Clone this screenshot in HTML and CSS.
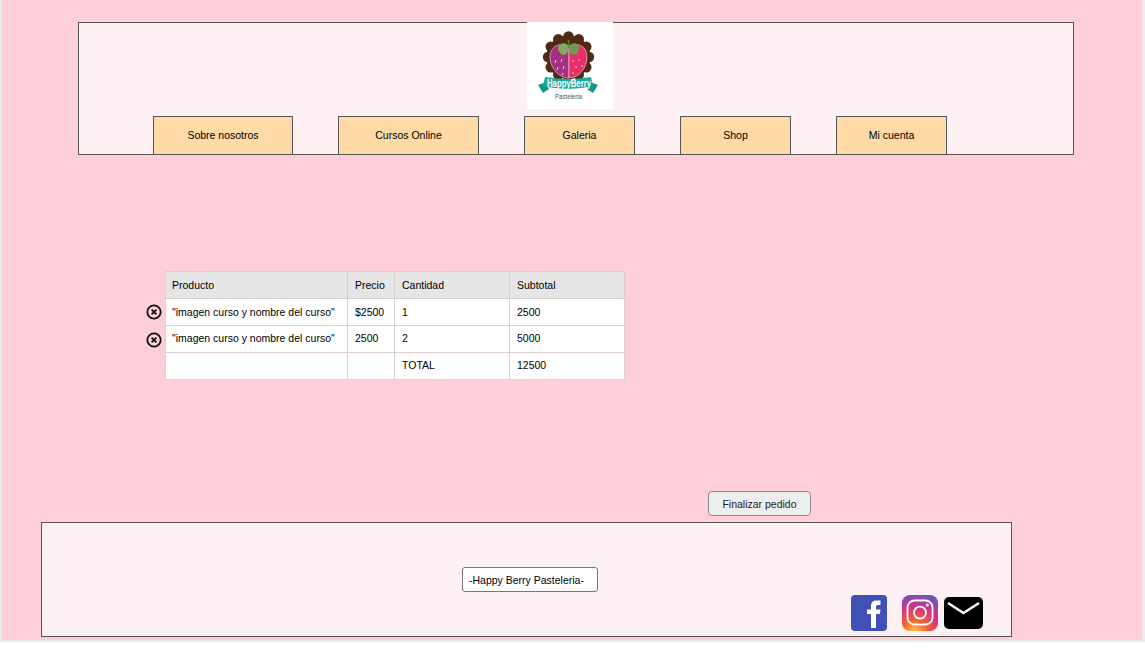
FILE: index.html
```html
<!DOCTYPE html>
<html lang="es">
<head>
  <meta charset="UTF-8" />
  <meta name="viewport" content="width=device-width, initial-scale=1.0"/>
  <title>Happy Berry Pasteleria</title>
  <link rel="stylesheet" href="styles.css">
</head>
<body>
  <div class="page">
    <header class="header">
      <div class="logo">
        <svg width="86" height="87" viewBox="0 0 86 87">
          <rect width="86" height="87" fill="#fff"/>
          <g fill="#4f2a17">
            <circle cx="41.500" cy="35" r="22"/>
            <circle cx="62" cy="35" r="5.200"/>
            <circle cx="59.300" cy="45.300" r="5.200"/>
            <circle cx="51.800" cy="52.800" r="5.200"/>
            <circle cx="41.500" cy="55.500" r="5.200"/>
            <circle cx="31.200" cy="52.800" r="5.200"/>
            <circle cx="23.700" cy="45.300" r="5.200"/>
            <circle cx="21" cy="35" r="5.200"/>
            <circle cx="23.700" cy="24.700" r="5.200"/>
            <circle cx="31.200" cy="17.200" r="5.200"/>
            <circle cx="41.500" cy="14.500" r="5.200"/>
            <circle cx="51.800" cy="17.200" r="5.200"/>
            <circle cx="59.300" cy="24.700" r="5.200"/>
          </g>
          <path d="M42 24 C33 20 23 24 23 35 C23 46 32 56 42 56 Z" fill="#a5307f" stroke="#e9d6e0" stroke-width="0.600"/>
          <path d="M42 24 C51 20 60 24 60 35 C60 46 52 56 42 56 Z" fill="#e82f6c" stroke="#e9d6e0" stroke-width="0.600"/>
          <g fill="none" stroke="#f3d3e4" stroke-width="1">
            <path d="M29 38l-1 3M35 37l-1 3M31 45l-1 3M37 44l-1 3M36 51l-1 2M46 38v2M52 37v2M49 44v2M55 43v2M46 50v2"/>
          </g>
          <path d="M41 23 C37 20 32 21 31 26 C32 33 38 36 41 29 Z" fill="#86a85f"/>
          <path d="M43 23 C47 20 51 21 52 26 C51 33 45 36 43 29 Z" fill="#6f9c4f"/>
          <path d="M41.500 26 L41.500 18" stroke="#4f8a3a" stroke-width="1.500"/>
          <path d="M11 63 L19 60 L22 67 L16 71 Z" fill="#16958a"/>
          <path d="M71 63 L63 60 L60 67 L66 71 Z" fill="#16958a"/>
          <path d="M18 55 Q41 59 64 55 L66 64 Q41 70 16 64 Z" fill="#1aa99b"/>
          <text x="20" y="65" class="logo-name" textLength="44" lengthAdjust="spacingAndGlyphs">HappyBerry</text>
          <text x="28" y="77" class="logo-sub" textLength="27" lengthAdjust="spacingAndGlyphs">Pasteleria</text>
        </svg>
      </div>
      <nav class="nav">
        <a class="nav-btn first">Sobre nosotros</a>
        <a class="nav-btn wide">Cursos Online</a>
        <a class="nav-btn">Galeria</a>
        <a class="nav-btn">Shop</a>
        <a class="nav-btn">Mi cuenta</a>
      </nav>
    </header>

    <section class="cart">
      <div class="remove-col">
        <svg class="remove" width="16" height="16" viewBox="0 0 16 16">
          <circle cx="8" cy="8" r="6.700"/>
          <path d="M5.600 5.600l4.800 4.800M10.400 5.600l-4.800 4.800"/>
        </svg>
        <svg class="remove" width="16" height="16" viewBox="0 0 16 16">
          <circle cx="8" cy="8" r="6.700"/>
          <path d="M5.600 5.600l4.800 4.800M10.400 5.600l-4.800 4.800"/>
        </svg>
      </div>
      <table class="cart-table">
        <thead>
          <tr>
            <th class="c1">Producto</th>
            <th class="c2">Precio</th>
            <th class="c3">Cantidad</th>
            <th class="c4">Subtotal</th>
          </tr>
        </thead>
        <tbody>
          <tr>
            <td>"imagen curso y nombre del curso"</td>
            <td>$2500</td>
            <td>1</td>
            <td>2500</td>
          </tr>
          <tr>
            <td>"imagen curso y nombre del curso"</td>
            <td>2500</td>
            <td>2</td>
            <td>5000</td>
          </tr>
          <tr>
            <td></td>
            <td></td>
            <td>TOTAL</td>
            <td>12500</td>
          </tr>
        </tbody>
      </table>
    </section>

    <div class="actions">
      <button class="finish">Finalizar pedido</button>
    </div>

    <footer class="footer">
      <div class="footer-name">-Happy Berry Pasteleria-</div>
      <div class="social">
        <svg class="fb" width="36" height="36" viewBox="0 0 36 36">
          <rect width="36" height="36" rx="4" fill="#3f51b5"/>
          <path d="M20 33V19H16V14.500H20V11C20 7.500 22 5.500 25.500 5.500H29.500V10H27C25.500 10 25 10.700 25 12V14.500H29.500L28.800 19H25V33Z" fill="#fff"/>
        </svg>
        <svg class="ig" width="36" height="36" viewBox="0 0 36 36">
          <defs>
            <radialGradient id="igGrad" cx="0.35" cy="1.05" r="1.150">
              <stop offset="0" stop-color="#fdd04f"/>
              <stop offset="0.3" stop-color="#f8632f"/>
              <stop offset="0.65" stop-color="#d42e8c"/>
              <stop offset="1" stop-color="#5b5bc8"/>
            </radialGradient>
          </defs>
          <rect width="36" height="36" rx="8" fill="url(#igGrad)"/>
          <rect x="5.500" y="5.500" width="25" height="24" rx="7" fill="none" stroke="#fff" stroke-width="1.800"/>
          <circle cx="18" cy="17.700" r="6" fill="none" stroke="#fff" stroke-width="1.800"/>
          <circle cx="25.300" cy="10" r="1.500" fill="#fff"/>
        </svg>
        <svg class="mail" width="39" height="32" viewBox="0 0 39 32">
          <rect width="39" height="32" rx="5" fill="#000"/>
          <path d="M4 6L19.500 16L35 6" fill="none" stroke="#fff" stroke-width="2.500"/>
        </svg>
      </div>
    </footer>
  </div>
</body>
</html>
```
FILE: styles.css
```css
* {
  box-sizing: border-box;
}
body {
  margin: 0;
  background: #fff;
  font-family: 'Liberation Sans', Arial, sans-serif;
  font-size: 10.5px;
  color: #000;
}

.page {
  width: 1145px;
  height: 642px;
  padding-top: 22px;
  background: #ffcfd9;
  border-left: 2px solid #ececec;
  border-right: 3px solid #ececec;
  border-bottom: 2px solid #ececec;
}

.header {
  display: flex;
  flex-direction: column;
  width: 996px;
  height: 133px;
  margin-left: 76px;
  background: #fff0f4;
  border: 1px solid #555;
}

.logo {
  height: 94px;
  margin-top: -1px;
  margin-left: 448px;
}

.logo svg {
  display: block;
}

.logo-name {
  font-size: 10px;
  font-weight: bold;
  fill: #fff;
}

.logo-sub {
  font-size: 8px;
  fill: #555;
}

.nav {
  display: flex;
  gap: 45px;
  margin-left: 74px;
}

.nav-btn {
  display: flex;
  align-items: center;
  justify-content: center;
  width: 111px;
  height: 38px;
  padding-bottom: 2px;
  background: #ffd9a6;
  border: 1px solid #555;
  border-bottom: none;
}

.nav-btn.first {
  width: 140px;
}

.nav-btn.wide {
  width: 141px;
}

.cart {
  display: flex;
  margin-top: 116px;
  margin-left: 144px;
}

.remove-col {
  display: flex;
  flex-direction: column;
  gap: 12px;
  width: 19px;
  padding-top: 33px;
}

.remove {
  display: block;
}

.remove circle {
  fill: none;
  stroke: #111;
  stroke-width: 1.8;
}

.remove path {
  fill: none;
  stroke: #111;
  stroke-width: 1.8;
}

.cart-table {
  width: 459px;
  height: 109px;
  border-collapse: collapse;
  table-layout: fixed;
  background: #fff;
  align-self: flex-start;
}

.cart-table th,
.cart-table td {
  height: 27px;
  padding: 0 0 0 7px;
  border: 1px solid #dfced4;
  font-weight: normal;
  text-align: left;
}

.cart-table th:first-child,
.cart-table td:first-child {
  padding-left: 6px;
}

.cart-table tbody tr + tr td {
  padding-bottom: 2px;
}

.cart-table th {
  background: #e5e5e5;
  border-color: #d4d0d1;
}

.c1 { width: 182px; }
.c2 { width: 47px; }
.c3 { width: 115px; }
.c4 { width: 115px; }

.actions {
  display: flex;
  margin-top: 111px;
  margin-left: 706px;
}

.finish {
  width: 103px;
  height: 25px;
  padding: 0;
  background: #eeeeee;
  border: 1px solid #888;
  border-radius: 4px;
  font-family: inherit;
  font-size: 10.5px;
  color: #222;
}

.footer {
  display: flex;
  width: 971px;
  height: 115px;
  margin-top: 6px;
  margin-left: 39px;
  background: #fff0f4;
  border: 1px solid #555;
}

.footer-name {
  display: flex;
  align-items: center;
  width: 136px;
  height: 25px;
  margin-top: 44px;
  margin-left: 420px;
  padding-left: 6px;
  background: #fff;
  border: 1px solid #777;
  border-radius: 3px;
}

.social {
  display: flex;
  align-items: flex-start;
  margin-top: 72px;
  margin-left: 253px;
}

.ig {
  margin-left: 15px;
}

.mail {
  margin-left: 6px;
  margin-top: 2px;
}
```
